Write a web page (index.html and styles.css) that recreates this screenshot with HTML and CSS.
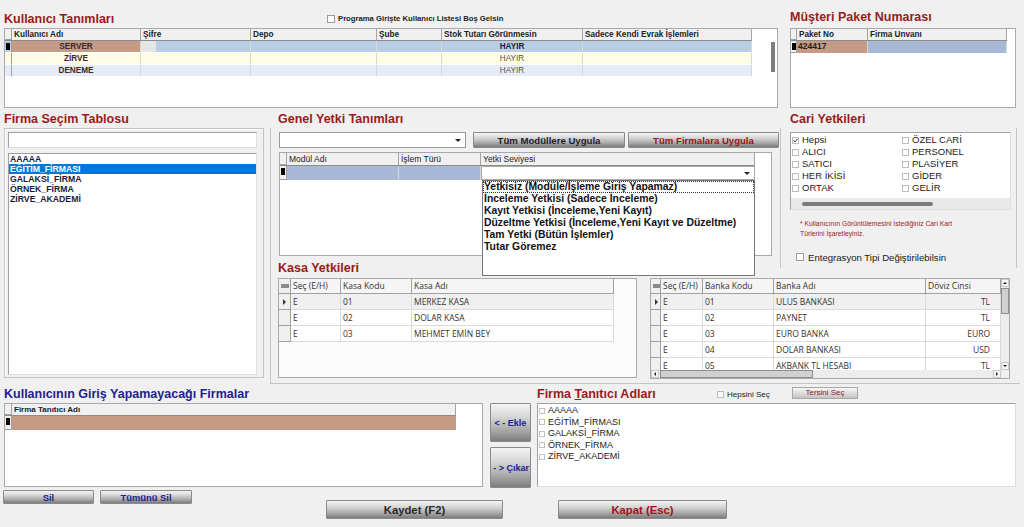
FILE: index.html
```html
<!DOCTYPE html>
<html lang="tr">
<head>
<meta charset="utf-8">
<title>Kullanıcı Tanımları</title>
<link rel="stylesheet" href="styles.css">
</head>
<body>
<div class="app">
  <section class="top">
    <div class="users">
      <div class="users-head">
        <div class="title">Kullanıcı Tanımları</div>
        <label class="chk-top"><span class="cb"></span>Programa Girişte Kullanıcı Listesi Boş Gelsin</label>
      </div>
      <div class="box g1">
        <div class="g1-table">
          <div class="gr gh g1h g1-cols">
            <div class="ind"></div><div>Kullanıcı Adı</div><div>Şifre</div><div>Depo</div><div>Şube</div><div>Stok Tutarı Görünmesin</div><div>Sadece Kendi Evrak İşlemleri</div>
          </div>
          <div class="gr g1r g1-cols r-sel">
            <div class="ind"><span class="cur"></span></div><div class="c salmon">SERVER</div><div class="pw"><span class="pw-box"></span></div><div></div><div></div><div class="c strong">HAYIR</div><div></div>
          </div>
          <div class="gr g1r g1-cols r-yel">
            <div class="ind"></div><div class="c">ZİRVE</div><div></div><div></div><div></div><div class="c light">HAYIR</div><div></div>
          </div>
          <div class="gr g1r g1-cols r-blu">
            <div class="ind"></div><div class="c">DENEME</div><div></div><div></div><div></div><div class="c light">HAYIR</div><div></div>
          </div>
        </div>
        <div class="vscroll"><div class="vthumb"></div></div>
      </div>
    </div>
    <div class="paket">
      <div class="title ph">Müşteri Paket Numarası</div>
      <div class="box g2">
        <div class="gr gh g2h g2-cols"><div class="ind"></div><div>Paket No</div><div>Firma Unvanı</div></div>
        <div class="gr g2r g2-cols"><div class="ind"><span class="cur"></span></div><div class="salmon">424417</div><div class="steel"></div></div>
      </div>
    </div>
  </section>

  <section class="mid">
    <div class="fs">
      <div class="title mt">Firma Seçim Tablosu</div>
      <div class="fs-group">
        <div class="textbox"></div>
        <div class="fs-list">
          <div class="li">AAAAA</div>
          <div class="li sel">EĞİTİM_FİRMASI</div>
          <div class="li">GALAKSİ_FİRMA</div>
          <div class="li">ÖRNEK_FİRMA</div>
          <div class="li">ZİRVE_AKADEMİ</div>
        </div>
      </div>
    </div>

    <div class="mr">
      <div class="mr-titles">
        <div class="title mt t-genel">Genel Yetki Tanımları</div>
        <div class="title mt t-cari">Cari Yetkileri</div>
      </div>
      <div class="mbox">
        <div class="genel">
          <div class="combo-row">
            <div class="combo"><span class="dd"></span></div>
            <button class="btn b-mod">Tüm Modüllere Uygula</button>
            <button class="btn red b-firm">Tüm Firmalara Uygula</button>
          </div>
          <div class="box g3">
            <div class="gr gh g3h g3-cols"><div class="ind"></div><div>Modül Adı</div><div>İşlem Türü</div><div>Yetki Seviyesi</div></div>
            <div class="gr g3r g3-cols"><div class="ind"><span class="cur"></span></div><div class="steel"></div><div class="steel"></div><div class="edit"><span class="dd"></span></div></div>
            <div class="droplist">
              <div class="di focus">Yetkisiz (Modüle/İşleme Giriş Yapamaz)</div>
              <div class="di">İnceleme Yetkisi (Sadece İnceleme)</div>
              <div class="di">Kayıt Yetkisi (İnceleme,Yeni Kayıt)</div>
              <div class="di">Düzeltme Yetkisi (İnceleme,Yeni Kayıt ve Düzeltme)</div>
              <div class="di">Tam Yetki (Bütün İşlemler)</div>
              <div class="di">Tutar Göremez</div>
            </div>
          </div>
        </div>

        <div class="cari">
          <div class="cari-list">
            <div class="cari-items">
              <div class="ci"><span class="cb sm"><svg width="5" height="5" viewBox="0 0 5 5"><path d="M0.5 2.5 L2 4 L4.5 0.8" stroke="#333" stroke-width="1" fill="none"/></svg></span>Hepsi</div>
              <div class="ci"><span class="cb sm"></span>ÖZEL CARİ</div>
              <div class="ci"><span class="cb sm"></span>ALICI</div>
              <div class="ci"><span class="cb sm"></span>PERSONEL</div>
              <div class="ci"><span class="cb sm"></span>SATICI</div>
              <div class="ci"><span class="cb sm"></span>PLASİYER</div>
              <div class="ci"><span class="cb sm"></span>HER İKİSİ</div>
              <div class="ci"><span class="cb sm"></span>GİDER</div>
              <div class="ci"><span class="cb sm"></span>ORTAK</div>
              <div class="ci"><span class="cb sm"></span>GELİR</div>
            </div>
            <div class="cari-hs"><div class="hthumb"></div></div>
          </div>
          <div class="cari-note">* Kullanıcının Görüntülemesini İstediğiniz Cari Kart<br>Türlerini İşaretleyiniz.</div>
          <label class="ent"><span class="cb"></span>Entegrasyon Tipi Değiştirilebilsin</label>
        </div>

        <div class="kasa">
          <div class="title kt">Kasa Yetkileri</div>
          <div class="box g5">
            <div class="gr gh5 g5-cols"><div class="ind5"><span class="hicon"></span></div><div>Seç (E/H)</div><div>Kasa Kodu</div><div>Kasa Adı</div></div>
            <div class="gr br5 g5-cols cur-row"><div class="ind5"><span class="tri"></span></div><div>E</div><div>01</div><div>MERKEZ KASA</div></div>
            <div class="gr br5 g5-cols"><div class="ind5"></div><div>E</div><div>02</div><div>DOLAR KASA</div></div>
            <div class="gr br5 g5-cols"><div class="ind5"></div><div>E</div><div>03</div><div>MEHMET EMİN BEY</div></div>
          </div>
        </div>

        <div class="banka">
          <div class="box g6">
            <div class="g6-main">
              <div class="g6-tbl">
                <div class="gr gh5 g6-cols"><div class="ind5"><span class="hicon"></span></div><div>Seç (E/H)</div><div>Banka Kodu</div><div>Banka Adı</div><div>Döviz Cinsi</div></div>
                <div class="gr br5 g6-cols cur-row"><div class="ind5"><span class="tri"></span></div><div>E</div><div>01</div><div>ULUS BANKASI</div><div class="r">TL</div></div>
                <div class="gr br5 g6-cols"><div class="ind5"></div><div>E</div><div>02</div><div>PAYNET</div><div class="r">TL</div></div>
                <div class="gr br5 g6-cols"><div class="ind5"></div><div>E</div><div>03</div><div>EURO BANKA</div><div class="r">EURO</div></div>
                <div class="gr br5 g6-cols"><div class="ind5"></div><div>E</div><div>04</div><div>DOLAR BANKASI</div><div class="r">USD</div></div>
                <div class="gr br5 g6-cols"><div class="ind5"></div><div>E</div><div>05</div><div>AKBANK TL HESABI</div><div class="r">TL</div></div>
              </div>
              <div class="vsb">
                <div class="sarr"><span class="a-up"></span></div>
                <div class="vthumb2"></div>
                <div class="sfill"></div>
                <div class="sarr"><span class="a-down"></span></div>
              </div>
            </div>
            <div class="hsb">
              <div class="sarr"><span class="a-left"></span></div>
              <div class="hthumb2"></div>
              <div class="sfill"></div>
              <div class="sarr"><span class="a-right"></span></div>
              <div class="corner"></div>
            </div>
          </div>
        </div>
      </div>
    </div>
  </section>

  <section class="bot">
    <div class="bl">
      <div class="title navy bt">Kullanıcının Giriş Yapamayacağı Firmalar</div>
      <div class="box g4">
        <div class="gr gh g4h g4-cols"><div class="ind"></div><div>Firma Tanıtıcı Adı</div></div>
        <div class="gr g4r g4-cols"><div class="ind"><span class="cur"></span></div><div class="salmon"></div></div>
      </div>
    </div>
    <div class="bm">
      <button class="btn navy-t b-ekle">&lt; - Ekle</button>
      <button class="btn navy-t b-cikar">- &gt; Çıkar</button>
    </div>
    <div class="brt">
      <div class="br-head">
        <div class="title bt">Firma <span class="u">T</span>anıtıcı Adları</div>
        <label class="hepsi"><span class="cb sm"></span>Hepsini Seç</label>
        <button class="btn-lite">Tersini Seç</button>
      </div>
      <div class="fta">
        <div class="fi"><span class="cb xs"></span>AAAAA</div>
        <div class="fi"><span class="cb xs"></span>EĞİTİM_FİRMASI</div>
        <div class="fi"><span class="cb xs"></span>GALAKSİ_FİRMA</div>
        <div class="fi"><span class="cb xs"></span>ÖRNEK_FİRMA</div>
        <div class="fi"><span class="cb xs"></span>ZİRVE_AKADEMİ</div>
      </div>
    </div>
  </section>

  <section class="foot">
    <button class="btn navy-t b-sil">Sil</button>
    <button class="btn navy-t b-tum">Tümünü Sil</button>
    <button class="btn big b-kaydet">Kaydet (F2)</button>
    <button class="btn big red b-kapat">Kapat (Esc)</button>
  </section>
</div>
</body>
</html>
```

FILE: styles.css
```css
* { box-sizing: border-box; }
html, body { margin: 0; padding: 0; }
body {
  width: 1024px;
  height: 527px;
  overflow: hidden;
  background: #f0f0f0;
  font-family: "Liberation Sans", Arial, sans-serif;
  color: #1b1b1b;
}

.title {
  font-weight: bold;
  font-size: 12.5px;
  line-height: 18px;
  color: #9b1b1b;
  white-space: nowrap;
}
.title.navy { color: #22228e; }
.u { text-decoration: underline; text-decoration-thickness: 1px; text-underline-offset: 1px; }

.box { background: #fff; border: 1px solid #a9a9a9; }

.cb {
  display: inline-flex;
  align-items: center;
  justify-content: center;
  width: 8px;
  height: 8px;
  border: 1px solid #9c9c9c;
  background: #fff;
  flex: none;
}
.cb.sm { width: 7px; height: 7px; border-color: #bcbcbc; }
.cb.xs { width: 6px; height: 6px; border-color: #c2c2c2; }

/* generic grid rows */
.gr { display: grid; width: fit-content; }
.gh { background: #f0f0f0; border-bottom: 1px solid #8c8c8c; }
.gh > div { border-right: 1px solid #a5a5a5; padding-left: 2px; white-space: nowrap; overflow: hidden; }
.ind { background: #f0f0f0; border-right: 1px solid #a0a0a0 !important; border-bottom: 1px solid #a0a0a0; padding: 0 !important; }
.cur { display: block; width: 4px; height: 7px; background: #000; margin: 2px 0 0 1px; }
.salmon { background: #c59b86 !important; }
.steel { background: #a7b9d7 !important; }

/* ---------- top ---------- */
.top { display: flex; padding-top: 9px; height: 110px; }
.users { margin-left: 4px; width: 774px; }
.users-head { display: grid; grid-template-columns: 323px auto; align-items: center; height: 19px; }
.chk-top { display: flex; align-items: center; gap: 3px; font-size: 7.7px; font-weight: bold; color: #222; white-space: nowrap; }

.g1 { height: 80px; display: flex; }
.g1-table { flex: none; }
.g1-cols { grid-template-columns: 7px 129px 110px 126px 65px 141px 169px; }
.g1h { height: 12px; font-size: 8.2px; font-weight: bold; line-height: 11px; color: #222; }
.g1r { height: 12px; font-size: 8.2px; font-weight: bold; line-height: 11px; color: #3a2a2a; }
.g1r > div { border-right: 1px solid #d8d8d8; border-bottom: 1px solid #fff; white-space: nowrap; overflow: hidden; }
.g1r .c { text-align: center; }
.g1r .strong { color: #1e1e3c; }
.g1r .light { font-weight: normal; color: #5f5040; }
.r-sel > div { background: #b9cde5; }
.r-yel > div { background: #fffce6; }
.r-blu > div { background: #e6ecf7; }
.pw { display: flex; }
.pw-box { width: 15px; height: 100%; background: #e6e6e6; }
.vscroll { flex: 1; display: flex; justify-content: flex-end; padding-right: 2px; }
.vthumb { width: 4px; height: 30px; margin-top: 13px; background: #7d7d7d; }

.paket { margin-left: 12px; width: 226px; }
.paket .ph { height: 19px; line-height: 17px; }
.g2 { height: 80px; }
.g2-cols { grid-template-columns: 6px 71px 139px; }
.g2h { height: 12px; font-size: 8.2px; font-weight: bold; line-height: 11px; color: #222; }
.g2r { height: 12px; font-size: 8.5px; font-weight: bold; line-height: 11px; color: #2a1a10; }
.g2r > div { padding-left: 1px; border-right: 1px solid #d8d8d8; }

/* ---------- middle ---------- */
.mid { display: flex; height: 275px; }
.mt { height: 18px; }
.fs { margin-left: 4px; width: 260px; }
.fs-group {
  height: 250px;
  border: 1px solid #c4c4c4;
  box-shadow: inset 1px 1px 0 #fff;
  padding: 3px 6px 0 3px;
}
.textbox {
  height: 16px;
  background: #fff;
  border: 1px solid #a0a0a0;
  border-right-color: #dedede;
  border-bottom-color: #dedede;
}
.fs-list {
  margin-top: 5px;
  height: 222px;
  background: #fff;
  border: 1px solid #a0a0a0;
  border-right-color: #dedede;
  border-bottom-color: #dedede;
  font-size: 8.7px;
  font-weight: bold;
  line-height: 10px;
  color: #1a1a40;
}
.li { padding-left: 1px; height: 10px; white-space: nowrap; }
.li.sel { background: #0078d7; color: #fff; }

.mr { margin-left: 6px; width: 750px; }
.mr-titles { display: grid; grid-template-columns: 510px 240px; height: 18px; }
.t-genel { padding-left: 8px; }
.t-cari { padding-left: 10px; }
.mbox {
  display: grid;
  grid-template-columns: 371px 138px 240px;
  grid-template-rows: 130px 10px 115px;
  border-left: 1px solid #c4c4c4;
  border-bottom: 1px solid #c4c4c4;
  height: 256px;
}

.genel { grid-column: 1 / 3; grid-row: 1; padding: 4px 0 0 8px; position: relative; z-index: 3; }
.combo-row { display: flex; height: 16px; }
.combo {
  width: 187px;
  height: 16px;
  background: #fff;
  border: 1px solid #9a9a9a;
  display: flex;
  justify-content: flex-end;
  align-items: center;
  padding-right: 4px;
}
.dd { width: 0; height: 0; border-left: 3px solid transparent; border-right: 3px solid transparent; border-top: 3px solid #222; }

.btn {
  font-family: "Liberation Sans", Arial, sans-serif;
  font-weight: bold;
  padding: 0;
  margin: 0;
  border: 1px solid #8a8a8a;
  border-radius: 1px;
  background: linear-gradient(#f4f4f4 0%, #d6d6d6 35%, #aaaaaa 70%, #7c7c7c 100%);
  color: #1e1e2e;
  white-space: nowrap;
  overflow: hidden;
  text-align: center;
}
.btn.red { color: #a01414; }
.btn.navy-t { color: #22228e; }
.b-mod { margin-left: 7px; width: 152px; height: 16px; font-size: 9.6px; }
.b-firm { margin-left: 3px; width: 151px; height: 16px; font-size: 9.6px; }

.g3 { margin-top: 4px; width: 493px; height: 104px; position: relative; }
.g3-cols { grid-template-columns: 7px 112px 82px 274px; }
.g3h { height: 13px; font-size: 8.5px; line-height: 12px; color: #222; }
.g3r { height: 14px; }
.g3r > div { border-right: 1px solid #d8d8d8; }
.edit { background: #fff; border: 1px solid #a9a9a9 !important; display: flex; justify-content: flex-end; align-items: center; padding-right: 4px; }

.droplist {
  position: absolute;
  left: 202px;
  top: 27px;
  width: 273px;
  height: 96px;
  background: #fff;
  border: 1px solid #777;
  z-index: 5;
  font-size: 10.4px;
  font-weight: bold;
  line-height: 12px;
  color: #111;
}
.di { padding-left: 1px; height: 12px; white-space: nowrap; }
.di.focus { outline: 1px dotted #333; outline-offset: -1px; }

/* cari */
.cari {
  grid-column: 3;
  grid-row: 1 / 3;
  width: 237px;
  border-left: 1px solid #c4c4c4;
  border-right: 1px solid #c4c4c4;
  padding: 4px 0 0 9px;
}
.cari-list {
  width: 221px;
  height: 78px;
  border: 1px solid #a0a0a0;
  border-right-color: #dedede;
  border-bottom-color: #dedede;
  background: #fff;
  display: flex;
  flex-direction: column;
}
.cari-items {
  flex: 1;
  display: grid;
  grid-template-columns: 110px auto;
  grid-auto-rows: 12px;
  padding: 1px 0 0 1px;
  font-size: 9.5px;
  line-height: 12px;
  color: #222;
}
.ci { display: flex; align-items: center; gap: 3px; white-space: nowrap; }
.cari-hs { height: 11px; background: #e9e9e9; padding: 4px 0 0 11px; }
.hthumb { width: 131px; height: 4px; background: #7b7b7b; border-radius: 2px; }
.cari-note { margin: 9px 0 0 10px; font-size: 6.8px; line-height: 10px; color: #a01c1c; white-space: nowrap; }
.ent { display: flex; align-items: center; gap: 4px; margin: 13px 0 0 6px; height: 10px; font-size: 9.6px; color: #222; white-space: nowrap; }

/* kasa & banka */
.kasa { grid-column: 1; grid-row: 2 / 4; padding-left: 7px; }
.kt { height: 20px; line-height: 20px; }
.g5 { width: 359px; height: 100px; background: #fcfcfc; }
.g5-cols { grid-template-columns: 12px 50px 71px 202px; }
.g6-cols { grid-template-columns: 10px 42px 71px 152px 75px; }
.gh5 {
  height: 15px;
  background: #f5f5f5;
  border-bottom: 1px solid #a0a0a0;
  font-family: "Open Sans", "Noto Sans", sans-serif;
  font-size: 8.5px;
  line-height: 14px;
  color: #333;
}
.gh5 > div { border-right: 1px solid #a0a0a0; padding-left: 2px; white-space: nowrap; overflow: hidden; }
.br5 {
  height: 16px;
  font-family: "Open Sans", "Noto Sans", sans-serif;
  font-size: 8.5px;
  line-height: 15px;
  color: #333;
}
.br5 > div { background: #fff; border-right: 1px solid #dadada; border-bottom: 1px solid #dadada; padding-left: 2px; white-space: nowrap; overflow: hidden; }
.br5.cur-row > div { background: #f0f0f0; }
.br5 > .r { text-align: right; padding-right: 10px; }
.ind5 { background: #f0f0f0 !important; border-right: 1px solid #a0a0a0 !important; border-bottom: 1px solid #a0a0a0 !important; padding: 0 !important; }
.gh5 > .ind5 { border-bottom: none !important; }
.hicon { display: block; width: 8px; height: 4px; background: #8a8a8a; margin: 5px 0 0 2px; }
.tri { display: block; width: 0; height: 0; border-left: 3px solid #333; border-top: 3px solid transparent; border-bottom: 3px solid transparent; margin: 5px 0 0 4px; }

.banka { grid-column: 2 / 4; grid-row: 3; padding: 10px 0 0 8px; }
.g6 { width: 360px; height: 101px; display: flex; flex-direction: column; background: #fcfcfc; }
.g6-main { flex: 1; display: flex; min-height: 0; }
.g6-tbl { flex: 1; overflow: hidden; }
.vsb { width: 8px; display: flex; flex-direction: column; background: #ececec; }
.hsb { height: 8px; display: flex; background: #ececec; }
.sarr { width: 8px; height: 8px; flex: none; display: flex; align-items: center; justify-content: center; background: #f4f4f4; border: 1px solid #c8c8c8; }
.sfill { flex: 1; }
.vthumb2 { height: 26px; margin: 1px 0 0; background: #d0d0d0; border: 1px solid #8e8e8e; }
.hthumb2 { width: 153px; margin-left: 1px; background: #d0d0d0; border: 1px solid #8e8e8e; }
.corner { width: 8px; background: #f0f0f0; }
.a-up { width: 0; height: 0; border-left: 2px solid transparent; border-right: 2px solid transparent; border-bottom: 2px solid #222; }
.a-down { width: 0; height: 0; border-left: 2px solid transparent; border-right: 2px solid transparent; border-top: 2px solid #222; }
.a-left { width: 0; height: 0; border-top: 2px solid transparent; border-bottom: 2px solid transparent; border-right: 2px solid #222; }
.a-right { width: 0; height: 0; border-top: 2px solid transparent; border-bottom: 2px solid transparent; border-left: 2px solid #222; }

/* ---------- bottom ---------- */
.bot { display: flex; height: 103px; padding-left: 4px; }
.bl { width: 479px; }
.bt { height: 18px; line-height: 18px; }
.g4 { height: 84px; }
.g4-cols { grid-template-columns: 7px 444px; }
.g4h { height: 12px; font-size: 8px; font-weight: bold; line-height: 11px; color: #222; }
.g4r { height: 14px; }

.bm { margin-left: 7px; width: 41px; padding-top: 18px; display: flex; flex-direction: column; }
.b-ekle { height: 39px; width: 41px; font-size: 9px; }
.b-cikar { height: 41px; width: 41px; margin-top: 5px; font-size: 9px; text-align: right; padding-right: 1px; }

.brt { margin-left: 6px; width: 479px; }
.br-head { display: grid; grid-template-columns: 180px 75px 66px; height: 18px; align-items: center; }
.hepsi { display: flex; align-items: center; gap: 3px; font-size: 8px; color: #222; white-space: nowrap; }
.btn-lite {
  align-self: start;
  margin: 2px 0 0 0;
  width: 66px;
  height: 12px;
  padding: 0;
  border: 1px solid #a8a8a8;
  background: linear-gradient(#f6f6f6, #c4c4c4);
  font-family: "Liberation Sans", Arial, sans-serif;
  font-size: 8px;
  line-height: 10px;
  color: #8c2020;
  white-space: nowrap;
}
.fta {
  height: 84px;
  background: #fff;
  border: 1px solid #a0a0a0;
  border-right-color: #dedede;
  border-bottom-color: #dedede;
  padding: 1px 0 0 1px;
  font-size: 9px;
  line-height: 11.5px;
  color: #222;
}
.fi { display: flex; align-items: center; gap: 3px; height: 11.5px; white-space: nowrap; }

.foot { display: flex; align-items: flex-start; padding-left: 3px; }
.b-sil { margin-top: 2px; width: 91px; height: 14px; font-size: 9.4px; }
.b-tum { margin-top: 2px; margin-left: 6px; width: 92px; height: 14px; font-size: 9.4px; }
.btn.big { margin-top: 12px; height: 19px; font-size: 11.3px; }
.b-kaydet { margin-left: 134px; width: 177px; color: #2a2a2a; }
.b-kapat { margin-left: 55px; width: 169px; }
```
